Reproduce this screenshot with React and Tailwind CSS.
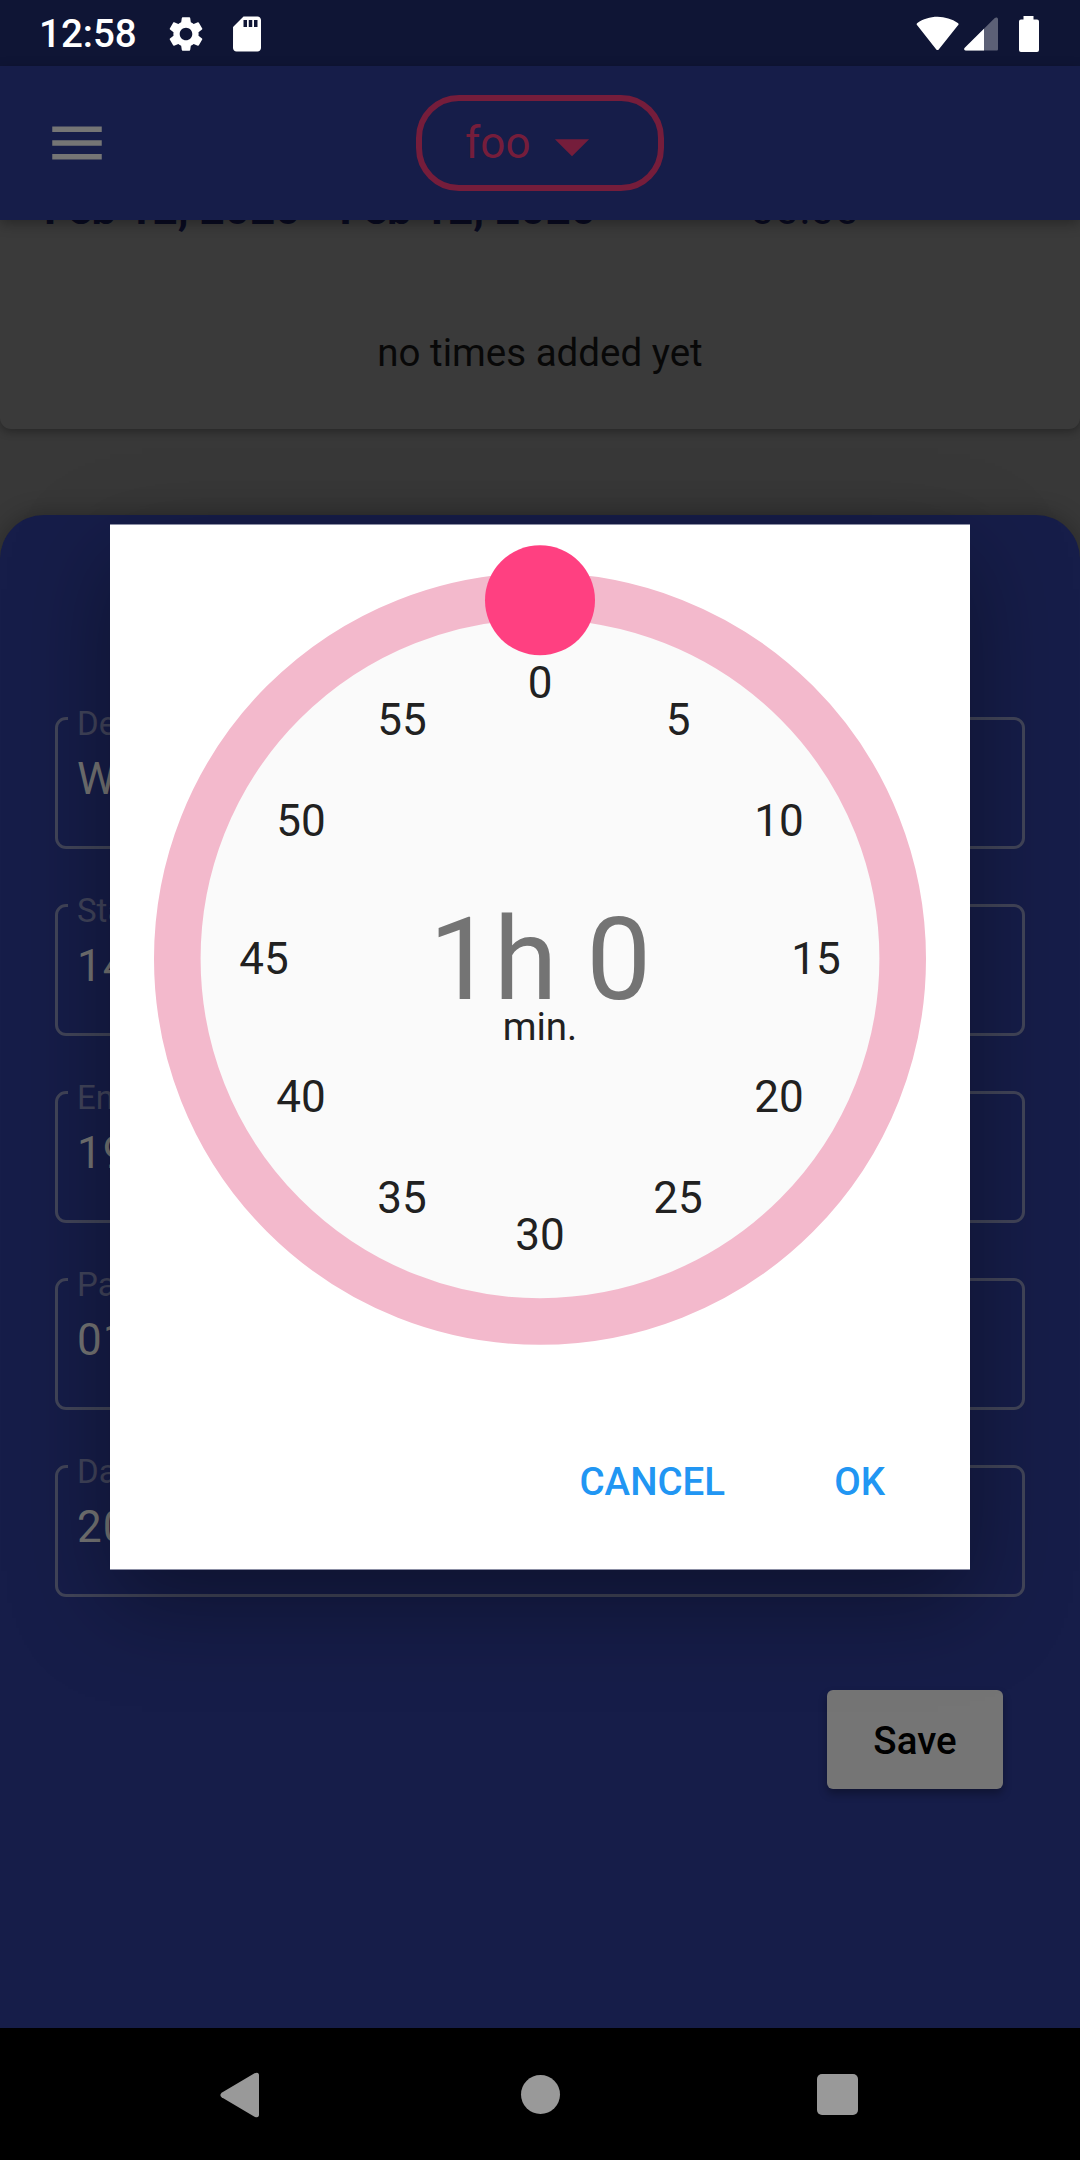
import React from "react";
import { MdMenu, MdArrowDropDown, MdSettings, MdSdCard } from "react-icons/md";

const fields = [
  { label: "Description", value: "Work" },
  { label: "Start", value: "14:00" },
  { label: "End", value: "19:00" },
  { label: "Pause", value: "01:00" },
  { label: "Date", value: "2020-02-12" },
];

function StatusBar() {
  return (
    <div className="flex h-[66px] items-center bg-[#0f1535] pt-px pl-[39px] pr-[41px] text-white">
      <span className="w-[98px] pt-px text-[38.5px] leading-[64px] font-medium">12:58</span>
      <MdSettings className="ml-[28px] size-[42px]" />
      <MdSdCard className="ml-[19px] size-[42px]" />
      <svg className="ml-auto h-[36px] w-[124px]" viewBox="0 0 124 36" fill="#fff">
        <path d="M2.400 9.600C1.400 8.800 1.400 7.600 2.400 6.900C8 3 15 0.700 22.500 0.700C30 0.700 37 3 42.800 6.900C43.800 7.600 43.800 8.800 42.800 9.600L23.700 33.400C23 34.300 22 34.300 21.300 33.400Z" />
        <path d="M81.500 34.500H51C49.100 34.500 48.600 33 49.800 31.800L79.800 2C81 0.900 83 1.500 83 3V33C83 34 82.500 34.500 81.500 34.500Z" fillOpacity="0.32" />
        <path d="M69 12.700V34.500H51C49.100 34.500 48.600 33 49.800 31.800Z" />
        <path d="M108.500 0H118.500V3.500H122Q124 3.500 124 5.500V34Q124 36 122 36H106Q104 36 104 34V5.500Q104 3.500 106 3.500H108.500Z" />
      </svg>
    </div>
  );
}

function AppBar() {
  return (
    <header className="relative z-10 flex h-[154px] items-center bg-[#161d49] pl-[44px] shadow-[0_4px_12px_rgba(0,0,0,0.3)]">
      <MdMenu className="size-[66px] text-[#757575]" />
      <button className="ml-[306px] flex h-[96px] w-[248px] items-center rounded-[43px] border-[6px] border-[#751d3b] pl-[43px] text-[#751d3b]">
        <span className="text-[44px] leading-[52px]">foo</span>
        <MdArrowDropDown className="mt-[6px] ml-px size-[82px]" />
      </button>
    </header>
  );
}

function Field({ label, value }) {
  return (
    <div className="relative h-[132px] rounded-[11px] border-[3px] border-[#424559] px-[19px] pt-[33px]">
      <span className="absolute top-[-15px] left-[10px] bg-[#161d49] px-[9px] text-[33px] leading-[38px] text-[#41445b]">{label}</span>
      <span className="block text-[44px] leading-[52px] tracking-[1px] text-[#757575]">{value}</span>
    </div>
  );
}

function Dial() {
  return (
    <svg className="h-[900px] w-[860px]" viewBox="110 525 860 900">
      <circle cx="540" cy="958.800" r="362.700" fill="#fafafa" stroke="#f3b9cc" strokeWidth="46.600" />
      {Array.from({ length: 12 }, (_, i) => {
        const a = (i * Math.PI) / 6;
        return (
          <text key={i} x={540 + 276 * Math.sin(a)} y={974 - 276 * Math.cos(a)} textAnchor="middle" className="fill-[#212121] text-[44px]">
            {i * 5}
          </text>
        );
      })}
      <text x="540" y="998.700" textAnchor="middle" className="fill-[#747474] text-[115.5px]">1h 0</text>
      <text x="540" y="1039.700" textAnchor="middle" className="fill-[#212121] text-[38.5px]">min.</text>
      <circle cx="540" cy="600.300" r="55" fill="#ff4081" />
    </svg>
  );
}

export default function App() {
  return (
    <div className="relative flex h-[2160px] w-[1080px] flex-col overflow-hidden bg-[#383838] font-['Roboto',sans-serif]">
      <StatusBar />
      <AppBar />
      <section className="h-[209px] rounded-b-[11px] bg-[#3a3a3a] shadow-[0_3px_8px_rgba(0,0,0,0.3)]">
        <div className="h-full overflow-hidden">
          <div className="-mt-[37px] flex pl-[44px] text-[44px] leading-[52px] text-[#090b21]">
            <span className="w-[706px] font-bold whitespace-pre">Feb 12, 2020 - Feb 12, 2020</span>
            <span>00:00</span>
          </div>
          <p className="mt-[95px] text-center text-[38.5px] leading-[46px] text-[#080808]">no times added yet</p>
        </div>
      </section>
      <main className="mt-[86px] flex flex-1 flex-col rounded-t-[44px] bg-[#161d49] px-[55px] pt-[202px] shadow-[0_0_24px_rgba(0,0,0,0.3)]">
        <div className="flex flex-col gap-[55px]">
          {fields.map((f) => (
            <Field key={f.label} label={f.label} value={f.value} />
          ))}
        </div>
        <button className="mt-[93px] mr-[22px] h-[99px] w-[176px] self-end rounded-[6px] bg-[#757575] pt-[2px] text-[38.5px] font-medium text-black shadow-[0_5px_8px_rgba(0,0,0,0.3)]">
          Save
        </button>
      </main>
      <nav className="flex h-[132px] items-center justify-between bg-black pt-px pr-[222px] pl-[220px] text-[#999]">
        <svg className="h-[46px] w-[40px]" viewBox="0 0 40 46" fill="currentColor">
          <path d="M1.600 20.700L34.500 1.300Q39 -0.500 39 3.500V42.500Q39 46.500 34.500 44.700L1.600 25.300Q-0.800 23 1.600 20.700Z" />
        </svg>
        <div className="ml-[4px] size-[39px] rounded-full bg-[#999]" />
        <div className="size-[41px] rounded-[5px] bg-[#999]" />
      </nav>
      <div className="absolute top-[524px] left-[110px] flex h-[1046px] w-[860px] flex-col border-y border-[#8b8ea4] bg-white shadow-[0_33px_90px_rgba(0,0,0,0.36)]">
        <Dial />
        <div className="flex items-center justify-end gap-[109px] pt-[34px] pr-[85px] text-[38.5px] leading-[46px] font-medium text-[#2196f3]">
          <button>CANCEL</button>
          <button>OK</button>
        </div>
      </div>
    </div>
  );
}
